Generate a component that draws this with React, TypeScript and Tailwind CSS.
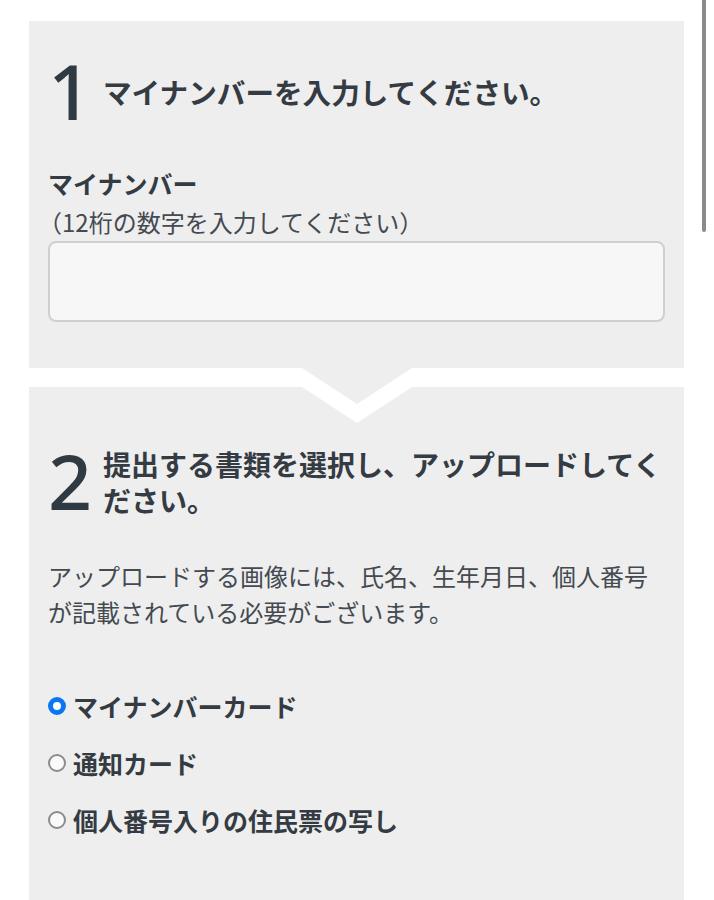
import React from "react";

function Radio({ checked, label }: { checked?: boolean; label: string }) {
  return (
    <div className="flex h-[57px] items-center gap-[7px]">
      {checked ? (
        <span className="box-border block h-[18px] w-[18px] rounded-full border-[5px] border-[#0a76f2] bg-white" />
      ) : (
        <span className="box-border block h-[18px] w-[18px] rounded-full border-[2px] border-[#8c8c8c] bg-[#fafafa]" />
      )}
      <span className="text-[25px] font-bold leading-[36px] text-[#343b42]">{label}</span>
    </div>
  );
}

export default function App() {
  return (
    <div className="relative min-h-[900px] overflow-hidden bg-white font-['Noto_Sans_CJK_JP',sans-serif] text-[#3a3f44]">
      <div className="absolute right-[8px] top-0 h-[232px] w-[4px] rounded-b-full bg-[#8a8a8a]" />
      <div className="flex flex-col pl-[29px] pr-[30px] pt-[21px]">
        {/* Panel 1 */}
        <div className="relative z-10 bg-[#eeeeee] px-[19px] pb-[46px] pt-[31px]">
          <div className="flex items-start">
            <span className="w-[48px] shrink-0 font-['Noto_Sans',sans-serif] text-[77px] font-medium leading-none text-[#2f3a43]">
              1
            </span>
            <h2 className="ml-[7px] mt-[22px] text-[28.6px] font-bold leading-[36px] text-[#343b42]">
              マイナンバーを入力してください。
            </h2>
          </div>
          <div className="mt-[36px] text-[25px] font-bold leading-[36px] text-[#343b42]">マイナンバー</div>
          <div className="-ml-[10px] mt-[3px] text-[24px] leading-[36px] text-[#444a50]">（12桁の数字を入力してください）</div>
          <div className="mt-[1px] h-[81px] rounded-[8px] border-[2px] border-[#cfcfcf] bg-[#f7f7f7]" />
          <div className="absolute left-[273px] top-full h-[36px] w-[110px] bg-[#eeeeee] [clip-path:polygon(0_0,100%_0,50%_100%)]" />
        </div>
        <div className="h-[19px]" />
        {/* Panel 2 */}
        <div className="relative min-h-[513px] bg-[#eeeeee] px-[19px] pb-[40px] pt-[55px]">
          <div className="absolute left-[273px] top-0 h-[36px] w-[110px] bg-white [clip-path:polygon(0_0,100%_0,50%_100%)]" />
          <div className="flex items-start">
            <span className="w-[48px] shrink-0 font-['Noto_Sans',sans-serif] text-[77px] font-medium leading-none text-[#2f3a43]">
              2
            </span>
            <h2 className="ml-[7px] mt-[4px] flex flex-col whitespace-nowrap text-[28px] font-bold leading-[36px] text-[#343b42]">
              <span className="block h-[36px]">提出する書類を選択し、アップロードしてく</span>
              <span className="block h-[36px]">ださい。</span>
            </h2>
          </div>
          <p className="mt-[39px] text-[24px] leading-[36px] text-[#444a50]">
            アップロードする画像には、氏名、生年月日、個人番号
            <br />
            が記載されている必要がございます。
          </p>
          <div className="mt-[47px] flex flex-col">
            <Radio checked label="マイナンバーカード" />
            <Radio label="通知カード" />
            <Radio label="個人番号入りの住民票の写し" />
          </div>
        </div>
      </div>
    </div>
  );
}
